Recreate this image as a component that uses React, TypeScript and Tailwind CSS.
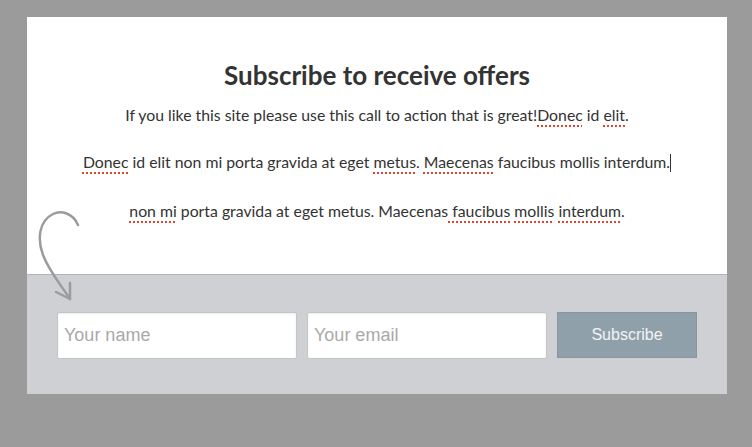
import React from "react";

const Typo = ({ children }: { children: React.ReactNode }) => (
  <span className="underline decoration-dotted decoration-[#e0452d] decoration-[1.5px] underline-offset-[4px]">
    {children}
  </span>
);

export default function App() {
  return (
    <div className="w-[752px] h-[447px] bg-[#9b9b9b] pt-[17px] pl-[27px]">
      <div className="relative w-[700px] bg-white">
        <div className="h-[258px] pt-[42px] text-center text-[#333] font-['Lato','Liberation_Sans',sans-serif] border-b border-[#b4b4b4]">
          <h1 className="text-[26px] leading-[32px] font-bold">Subscribe to receive offers</h1>
          <p className="mt-[12px] text-[15.8px] leading-6">
            If you like this site please use this call to action that is great!<Typo>Donec</Typo> id <Typo>elit</Typo>.
          </p>
          <p className="mt-[23px] text-[15.8px] leading-6">
            <Typo>Donec</Typo> id elit non mi porta gravida at eget <Typo>metus</Typo>. <Typo>Maecenas</Typo> faucibus mollis interdum.
            <span className="inline-block w-px h-[18px] bg-[#333] align-middle -mt-[3px]" />
          </p>
          <p className="mt-[25px] text-[15.8px] leading-6">
            <Typo>non mi</Typo> porta gravida at eget metus. Maecenas<Typo> faucibus</Typo> <Typo>mollis</Typo> <Typo>interdum</Typo>.
          </p>
        </div>
        <div className="h-[119px] bg-[#cfd0d4] pt-[37px] pl-[30px] flex items-start gap-[10px] font-['Liberation_Sans',sans-serif]">
          <input
            className="w-[240px] h-[47px] bg-white border border-[#c4c4c4] rounded-[2px] px-[6px] text-[18px] text-[#555] placeholder:text-[#a9a9a9] shadow-[inset_0_1px_2px_rgba(0,0,0,0.08)] outline-none"
            placeholder="Your name"
          />
          <input
            className="w-[240px] h-[47px] bg-white border border-[#c4c4c4] rounded-[2px] px-[6px] text-[18px] text-[#555] placeholder:text-[#a9a9a9] shadow-[inset_0_1px_2px_rgba(0,0,0,0.08)] outline-none"
            placeholder="Your email"
          />
          <button className="w-[140px] h-[46px] bg-[#8fa0aa] border border-[#8a969e] text-[16px] text-[#f2f4f5]">
            Subscribe
          </button>
        </div>
        <svg
          className="absolute left-[8px] top-[190px]"
          width="60"
          height="100"
          viewBox="0 0 60 100"
        >
          <path
            d="M43 18 C38 6 26 3 18 7 C4 14 2 32 8 48 C14 64 26 78 35 92"
            fill="none"
            stroke="#9a9c9d"
            strokeWidth="2.5"
            strokeLinecap="round"
          />
          <path
            d="M21 85 L35 92 L35 76"
            fill="none"
            stroke="#9a9c9d"
            strokeWidth="2.5"
            strokeLinecap="round"
            strokeLinejoin="round"
          />
        </svg>
      </div>
    </div>
  );
}
